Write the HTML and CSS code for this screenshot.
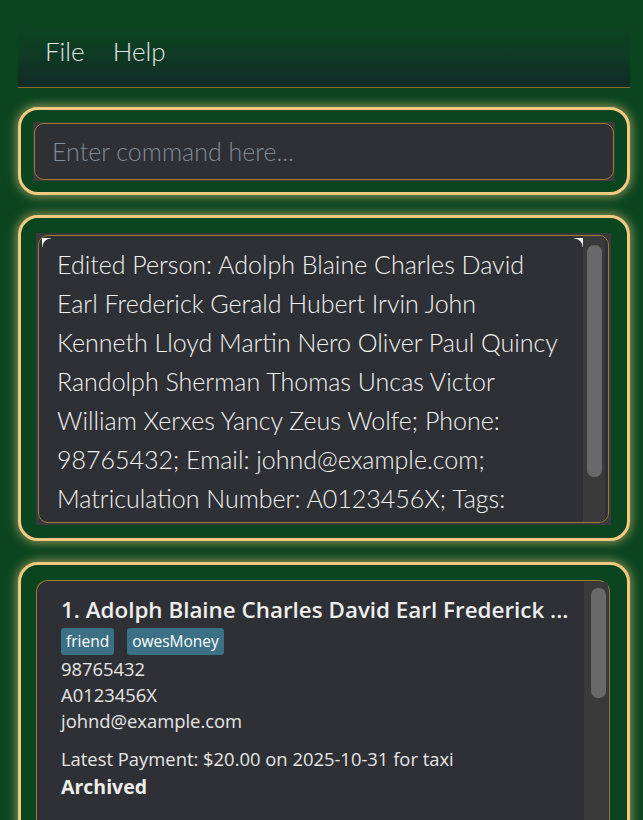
FILE: index.html
```html
<!DOCTYPE html>
<html>
<head>
<meta charset="utf-8">
<link rel="stylesheet" href="styles.css">
</head>
<body>
<div class="app">
  <div class="menubar">
    <span class="menu">File</span>
    <span class="menu">Help</span>
  </div>

  <div class="panel cmd-panel">
    <div class="cmd-box">
      <div class="cmd-input">Enter command here...</div>
    </div>
  </div>

  <div class="panel result-panel">
    <div class="result-box">
      <div class="result-inner">
        <div class="result-text">Edited Person: Adolph Blaine Charles David Earl Frederick Gerald Hubert Irvin John Kenneth Lloyd Martin Nero Oliver Paul Quincy Randolph Sherman Thomas Uncas Victor William Xerxes Yancy Zeus Wolfe; Phone: 98765432; Email: johnd@example.com; Matriculation Number: A0123456X; Tags:</div>
        <div class="vscroll"><div class="thumb"></div></div>
        <span class="corner tl"></span>
        <span class="corner tr"></span>
      </div>
    </div>
  </div>

  <div class="panel list-panel">
    <div class="list-box">
      <div class="card">
        <div class="name">1. Adolph Blaine Charles David Earl Frederick ...</div>
        <div class="tags">
          <span class="tag">friend</span>
          <span class="tag">owesMoney</span>
        </div>
        <div class="field">98765432</div>
        <div class="field">A0123456X</div>
        <div class="field">johnd@example.com</div>
        <div class="field payment">Latest Payment: $20.00 on 2025-10-31 for taxi</div>
        <div class="status">Archived</div>
      </div>
      <div class="list-scroll"><div class="thumb list-thumb"></div></div>
    </div>
  </div>
</div>
</body>
</html>
```

FILE: styles.css
```css
html, body {
  margin: 0;
  padding: 0;
  height: 820px;
  overflow: hidden;
}

body {
  background: #0b4520;
  font-family: "Lato", "Open Sans", sans-serif;
}

.app {
  padding: 25px 13px 0 18px;
  display: flex;
  flex-direction: column;
}

.menubar {
  height: 62px;
  border-bottom: 1px solid #8a6e28;
  background: linear-gradient(to bottom, #0c4520 0%, #0f3a24 50%, #112a27 100%);
  display: flex;
  align-items: center;
  gap: 28px;
  padding-left: 27px;
}

.menu {
  color: #e4e4e4;
  font-weight: 300;
  font-size: 26px;
  line-height: 30px;
  margin-top: -10px;
}

.panel {
  border: 3px solid #efca80;
  border-radius: 20px;
  background: #0b4520;
  box-shadow: 0 0 10px 2px rgba(236, 200, 125, 0.55);
}

.cmd-panel {
  margin-top: 19px;
  padding: 12px 12px 11px 12px;
}

.cmd-box {
  background: #3b3b3e;
  padding: 1px;
}

.cmd-input {
  height: 55px;
  border: 1px solid #9c7d32;
  border-radius: 10px;
  background: #2f3035;
  color: #7f8c99;
  font-weight: 300;
  font-size: 25px;
  line-height: 55px;
  padding-left: 17px;
}

.result-panel {
  margin-top: 20px;
  padding: 15px 16px 13px 15px;
}

.result-box {
  background: #3a3a3c;
  padding: 2px;
  height: 288px;
}

.result-inner {
  position: relative;
  height: 286px;
  border: 1px solid #9c7d32;
  border-radius: 10px;
  background: #2f3035;
  overflow: hidden;
  display: flex;
}

.result-text {
  flex: 1;
  padding: 9px 22px 0 18px;
  color: #f2f2f2;
  font-weight: 300;
  font-size: 25px;
  line-height: 39px;
}

.vscroll {
  width: 22px;
  margin-right: 3px;
  background: #3a3a3c;
  padding: 9px 3px 0 4px;
  box-sizing: border-box;
}

.thumb {
  height: 232px;
  background: #696969;
  border-radius: 7px;
}

.corner {
  position: absolute;
  top: 2px;
  width: 9px;
  height: 9px;
}

.corner.tl {
  left: 3px;
  background: radial-gradient(circle at 100% 100%, #2f3035 8px, #ffffff 9px);
}

.corner.tr {
  right: 25px;
  background: radial-gradient(circle at 0% 100%, #2f3035 8px, #ffffff 9px);
}

.list-panel {
  margin-top: 21px;
  padding: 15px 17px 0 15px;
  height: 300px;
}

.list-box {
  position: relative;
  height: 100%;
}

.card {
  height: 100%;
  border: 1px solid #9c7d32;
  border-bottom: none;
  border-radius: 12px 12px 0 0;
  background: #2f3035;
  padding: 14px 0 0 24px;
  box-sizing: border-box;
  color: #e6e6e6;
  font-family: "Open Sans", "Lato", sans-serif;
}

.name {
  font-weight: 600;
  font-size: 22.4px;
  line-height: 29px;
  color: #eeeeee;
  white-space: nowrap;
}

.tags {
  display: flex;
  gap: 13px;
  margin-top: 4px;
}

.tag {
  background: #3c7185;
  color: #ffffff;
  border-radius: 3px;
  font-size: 15.5px;
  height: 27px;
  line-height: 27px;
  padding: 0 5px;
}

.field {
  font-size: 18.4px;
  line-height: 26px;
}

.tags + .field {
  margin-top: 1px;
}

.payment {
  margin-top: 12px;
}

.status {
  font-weight: 700;
  font-size: 19.5px;
  line-height: 30px;
  color: #eeeeee;
}

.list-scroll {
  position: absolute;
  top: 2px;
  right: 2px;
  bottom: 0;
  width: 24px;
  background: #3a3a3c;
  padding: 6px 2px 0 7px;
  box-sizing: border-box;
}

.list-thumb {
  height: 110px;
}
```
